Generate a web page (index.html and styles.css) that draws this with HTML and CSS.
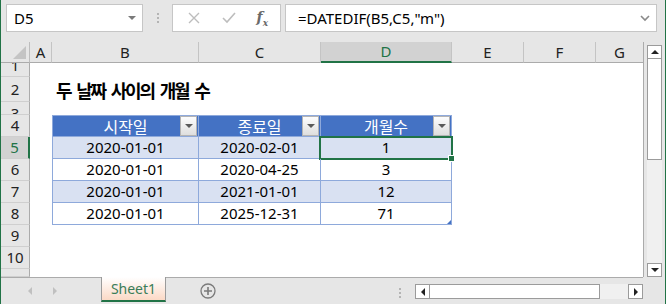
FILE: index.html
```html
<!DOCTYPE html>
<html lang="ko">
<head>
<meta charset="UTF-8">
<title>개월 수 - Excel</title>
<link rel="stylesheet" href="styles.css">
</head>
<body>
<div class="app">
  <!-- formula bar -->
  <div class="fbar">
    <div class="namebox">
      <span>D5</span>
      <span class="tri-down"></span>
    </div>
    <div class="vdots"><i></i><i></i><i></i></div>
    <div class="fbtns">
      <svg width="14" height="14" viewBox="0 0 14 14"><path d="M2 2 L12 12 M12 2 L2 12" stroke="#bdbdbd" stroke-width="1.4"/></svg>
      <svg width="16" height="14" viewBox="0 0 16 14"><path d="M2 7 L6 11 L14 2" stroke="#bdbdbd" stroke-width="1.6" fill="none"/></svg>
      <span class="fx">f<sub>x</sub></span>
    </div>
    <div class="finput">
      <span>=DATEDIF(B5,C5,"m")</span>
      <svg width="10" height="8" viewBox="0 0 10 8"><path d="M1 2 L5 6 L9 2" stroke="#8a8a8a" stroke-width="1.6" fill="none"/></svg>
    </div>
  </div>

  <div class="main">
    <div class="sheet">
      <div class="row hdr">
        <div class="corner"><span></span></div>
        <div class="ch">A</div>
        <div class="ch">B</div>
        <div class="ch">C</div>
        <div class="ch on">D</div>
        <div class="ch">E</div>
        <div class="ch">F</div>
        <div class="ch">G</div>
      </div>
      <div class="row r1"><div class="rh bottom">1</div></div>
      <div class="row r2">
        <div class="rh">2</div>
        <div class="title">두 날짜 사이의 개월 수</div>
      </div>
      <div class="row r3"><div class="rh top">3</div></div>
      <div class="row">
        <div class="rh">4</div>
        <div class="tc th b">시작일<span class="flt"></span></div>
        <div class="tc th c">종료일<span class="flt"></span></div>
        <div class="tc th d">개월수<span class="flt"></span></div>
      </div>
      <div class="row band">
        <div class="rh on">5</div>
        <div class="tc b">2020-01-01</div>
        <div class="tc c">2020-02-01</div>
        <div class="tc d sel">1</div>
      </div>
      <div class="row">
        <div class="rh">6</div>
        <div class="tc b">2020-01-01</div>
        <div class="tc c">2020-04-25</div>
        <div class="tc d">3</div>
      </div>
      <div class="row band">
        <div class="rh">7</div>
        <div class="tc b">2020-01-01</div>
        <div class="tc c">2021-01-01</div>
        <div class="tc d">12</div>
      </div>
      <div class="row">
        <div class="rh">8</div>
        <div class="tc b">2020-01-01</div>
        <div class="tc c">2025-12-31</div>
        <div class="tc d last">71</div>
      </div>
      <div class="row"><div class="rh">9</div></div>
      <div class="row"><div class="rh">10</div></div>
      <div class="row r11"><div class="rh top">11</div></div>
    </div>

    <div class="vscroll">
      <div class="sbtn"><span class="ar-up"></span></div>
      <div class="vthumb"></div>
      <div class="vtrack"></div>
      <div class="sbtn"><span class="ar-dn"></span></div>
    </div>
  </div>

  <!-- sheet tabs -->
  <div class="tabbar">
    <div class="nav"><span class="ar-l"></span><span class="ar-r"></span></div>
    <div class="tab">Sheet1</div>
    <div class="add">
      <svg width="16" height="16" viewBox="0 0 16 16"><circle cx="8" cy="8" r="7" fill="none" stroke="#7a7a7a" stroke-width="1.3"/><path d="M8 4 V12 M4 8 H12" stroke="#7a7a7a" stroke-width="1.6"/></svg>
    </div>
    <div class="vdots hd"><i></i><i></i><i></i></div>
    <div class="hscroll">
      <div class="hbtn"><span class="ar-l dark"></span></div>
      <div class="hthumb"></div>
      <div class="htrack"></div>
      <div class="hbtn"><span class="ar-r dark"></span></div>
    </div>
    <div class="tabfill"></div>
  </div>
</div>
</body>
</html>
```

FILE: styles.css
```css
/* page */
body {
  margin: 0;
  font-family: "Noto Sans", "Noto Sans CJK KR", sans-serif;
  color: #000;
}
.app {
  width: 664px;
  height: 304px;
  background: #e6e6e6;
  border-left: 1px solid #217346;
  border-right: 1px solid #217346;
  overflow: hidden;
}

/* formula bar */
.fbar {
  display: flex;
  align-items: flex-start;
  height: 42px;
  padding-top: 4px;
  box-sizing: border-box;
}
.namebox {
  display: flex;
  align-items: center;
  justify-content: space-between;
  width: 137px;
  height: 28px;
  margin-left: 5px;
  padding: 0 6px 0 7px;
  box-sizing: border-box;
  background: #fff;
  border: 1px solid #c6c6c6;
  font-size: 15px;
}
.tri-down {
  width: 0;
  height: 0;
  border-left: 4px solid transparent;
  border-right: 4px solid transparent;
  border-top: 4px solid #7a7a7a;
}
.vdots {
  display: flex;
  flex-direction: column;
  gap: 2px;
  margin: 9px 13px 0 14px;
}
.vdots i {
  width: 2px;
  height: 2px;
  background: #b4b4b4;
}
.fbtns {
  display: flex;
  align-items: center;
  justify-content: space-between;
  width: 109px;
  height: 28px;
  padding: 0 12px 0 14px;
  box-sizing: border-box;
  background: #fff;
  border: 1px solid #c6c6c6;
}
.fx {
  font-family: "DejaVu Serif", serif;
  font-style: italic;
  font-weight: bold;
  font-size: 14px;
  color: #6a6a6a;
}
.fx sub {
  font-size: 9px;
}
.finput {
  display: flex;
  align-items: center;
  justify-content: space-between;
  width: 372px;
  height: 28px;
  margin-left: 4px;
  padding: 0 6px 0 12px;
  box-sizing: border-box;
  background: #fff;
  border: 1px solid #c6c6c6;
  font-size: 15px;
}

/* grid */
.main {
  display: flex;
  height: 235px;
}
.sheet {
  width: 642px;
  background: #fff;
  border-right: 1px solid #ababab;
}
.row {
  display: grid;
  grid-template-columns: 29px 22px 147px 122px 131px 72px 72px 47px;
  height: 22px;
}
.hdr { height: 21px; }
.r1 { height: 14px; }
.r2 { height: 25px; }
.r3 { height: 13px; }
.r11 { height: 8px; }

.corner {
  position: relative;
  background: #e6e6e6;
  border-right: 1px solid #bdbdbd;
  border-bottom: 1px solid #ababab;
}
.corner span {
  position: absolute;
  right: 3px;
  bottom: 3px;
  width: 0;
  height: 0;
  border-left: 13px solid transparent;
  border-bottom: 13px solid #c4c4c4;
}
.ch {
  display: flex;
  align-items: center;
  justify-content: center;
  background: #e6e6e6;
  border-right: 1px solid #c4c4c4;
  border-bottom: 1px solid #ababab;
  font-size: 15px;
  line-height: 1;
  color: #222;
}
.ch:last-child { border-right: none; }
.ch.on {
  background: #d2d2d2;
  color: #217346;
  border-bottom: 2px solid #217346;
}
.rh {
  grid-column: 1;
  display: flex;
  align-items: center;
  justify-content: center;
  background: #e6e6e6;
  border-right: 1px solid #ababab;
  border-bottom: 1px solid #cfcfcf;
  font-size: 15px;
  line-height: 1;
  color: #222;
  overflow: hidden;
}
.rh.bottom { align-items: flex-end; padding-bottom: 3px; }
.rh.top { align-items: flex-start; padding-top: 4px; }
.rh.on {
  background: #d2d2d2;
  color: #217346;
  border-right: 2px solid #217346;
}

.title {
  grid-column: 3 / 6;
  display: flex;
  align-items: center;
  padding-left: 4px;
  font-family: "Noto Sans CJK KR", sans-serif;
  font-weight: bold;
  font-size: 18px;
  line-height: 1;
  letter-spacing: -2.2px;
  word-spacing: 3px;
}

/* table */
.tc {
  position: relative;
  display: flex;
  align-items: center;
  justify-content: center;
  border-right: 1px solid #8ea9db;
  border-bottom: 1px solid #8ea9db;
  font-size: 15px;
  line-height: 1;
}
.tc.b {
  grid-column: 3;
  border-left: 1px solid #8ea9db;
}
.tc.c { grid-column: 4; }
.tc.d { grid-column: 5; }
.band .tc { background: #d9e1f2; }
.th {
  background: #4472c4;
  color: #fff;
  border-top: 1px solid #8ea9db;
  font-family: "Noto Sans CJK KR", sans-serif;
  font-size: 16px;
}
.flt {
  position: absolute;
  right: 1px;
  top: 0;
  width: 15px;
  height: 18px;
  background: linear-gradient(#fdfdfd, #dedede);
  border: 1px solid #b4b4b4;
}
.flt::after {
  content: "";
  position: absolute;
  left: 4px;
  top: 7px;
  border-left: 4px solid transparent;
  border-right: 4px solid transparent;
  border-top: 4px solid #5a5a5a;
}
.sel::after {
  content: "";
  position: absolute;
  left: -2px;
  top: -1px;
  right: -2px;
  bottom: -2px;
  border: 2px solid #217346;
}
.sel::before {
  content: "";
  position: absolute;
  right: -4px;
  bottom: -4px;
  width: 5px;
  height: 5px;
  background: #217346;
  border: 1px solid #fff;
  z-index: 1;
}
.last::after {
  content: "";
  position: absolute;
  right: 0;
  bottom: 0;
  border-left: 4px solid transparent;
  border-bottom: 4px solid #4472c4;
}

/* vertical scroll bar */
.vscroll {
  display: flex;
  flex-direction: column;
  width: 15px;
  margin-left: 3px;
  padding-top: 3px;
}
.sbtn {
  display: flex;
  align-items: center;
  justify-content: center;
  height: 14px;
  background: #fff;
  border: 1px solid #9b9b9b;
  box-sizing: border-box;
}
.vthumb {
  height: 101px;
  background: #fff;
  border: 1px solid #9b9b9b;
  border-top: none;
  box-sizing: border-box;
}
.vtrack {
  flex: 1;
  background: #f0f0f0;
}
.ar-up, .ar-dn {
  width: 0;
  height: 0;
  border-left: 4px solid transparent;
  border-right: 4px solid transparent;
}
.ar-up { border-bottom: 4px solid #222; }
.ar-dn { border-top: 4px solid #222; }

/* sheet tabs */
.tabbar {
  display: flex;
  align-items: flex-start;
  height: 27px;
}
.nav {
  display: flex;
  align-items: center;
  gap: 21px;
  width: 100px;
  height: 27px;
  padding-left: 27px;
  box-sizing: border-box;
  border-top: 1px solid #ababab;
}
.ar-l, .ar-r {
  width: 0;
  height: 0;
  border-top: 4px solid transparent;
  border-bottom: 4px solid transparent;
}
.ar-l { border-right: 4px solid #c0c0c0; }
.ar-r { border-left: 4px solid #c0c0c0; }
.ar-l.dark { border-right-color: #222; }
.ar-r.dark { border-left-color: #222; }
.tab {
  display: flex;
  align-items: center;
  justify-content: center;
  width: 65px;
  height: 25px;
  box-sizing: border-box;
  background: linear-gradient(#fff, #fbd9c6);
  border-left: 1px solid #9b9b9b;
  border-right: 1px solid #9b9b9b;
  border-bottom: 2px solid #217346;
  font-size: 14px;
  line-height: 1;
  color: #3b7d58;
}
.add {
  display: flex;
  align-items: center;
  height: 27px;
  padding-left: 34px;
  width: 220px;
  box-sizing: border-box;
  border-top: 1px solid #ababab;
}
.vdots.hd {
  margin: 0;
  padding: 10px 14px 0 13px;
  height: 27px;
  box-sizing: border-box;
  border-top: 1px solid #ababab;
}
.hscroll {
  display: flex;
  width: 228px;
  height: 27px;
  border-top: 1px solid #ababab;
  padding-top: 6px;
  box-sizing: border-box;
}
.tabfill {
  flex: 1;
}
.hbtn {
  display: flex;
  align-items: center;
  justify-content: center;
  width: 15px;
  height: 15px;
  background: #fff;
  border: 1px solid #9b9b9b;
  box-sizing: border-box;
}
.hthumb {
  width: 170px;
  height: 15px;
  background: #fff;
  border: 1px solid #9b9b9b;
  border-left: none;
  box-sizing: border-box;
}
.htrack {
  width: 28px;
  height: 15px;
  background: #f0f0f0;
}
```
